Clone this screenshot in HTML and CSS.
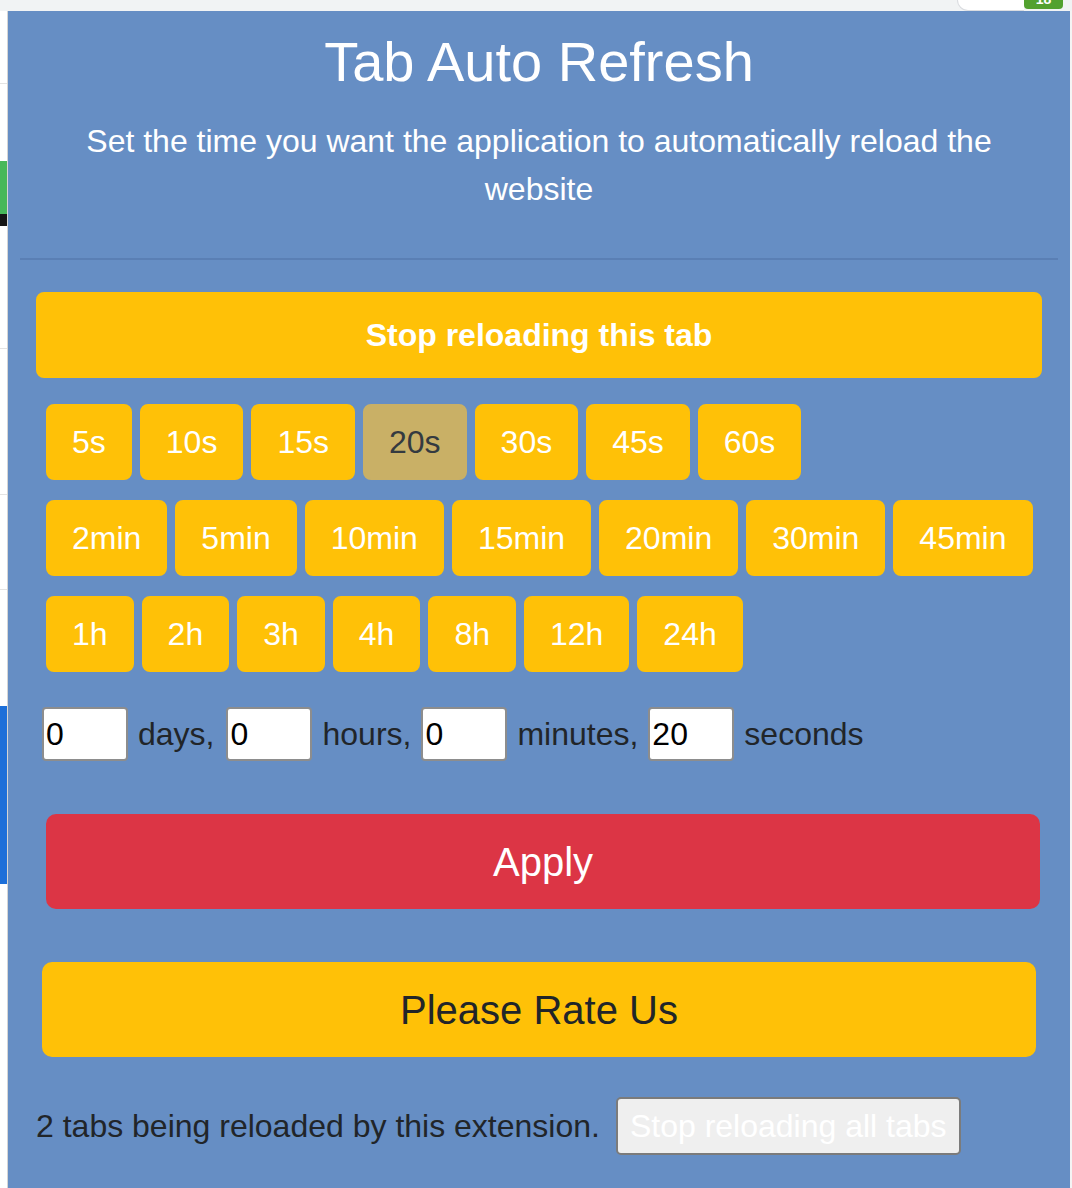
FILE: index.html
```html
<!DOCTYPE html>
<html lang="en">
<head>
<meta charset="utf-8">
<title>Tab Auto Refresh</title>
<link rel="stylesheet" href="styles.css">
</head>
<body>
<div class="topbar">
  <div class="pill"></div>
  <div class="badge"><span>18</span></div>
</div>
<div class="main">
  <div class="left-strip"></div>
  <div class="popup">
    <h1 class="title">Tab Auto Refresh</h1>
    <p class="subtitle">Set the time you want the application to automatically reload the website</p>
    <hr class="divider">
    <div class="stop-wrap"><button class="btn-stop">Stop reloading this tab</button></div>
    <div class="presets">
      <div class="preset-row">
        <button class="preset">5s</button>
        <button class="preset">10s</button>
        <button class="preset">15s</button>
        <button class="preset active">20s</button>
        <button class="preset">30s</button>
        <button class="preset">45s</button>
        <button class="preset">60s</button>
      </div>
      <div class="preset-row">
        <button class="preset">2min</button>
        <button class="preset">5min</button>
        <button class="preset">10min</button>
        <button class="preset">15min</button>
        <button class="preset">20min</button>
        <button class="preset">30min</button>
        <button class="preset">45min</button>
      </div>
      <div class="preset-row">
        <button class="preset">1h</button>
        <button class="preset">2h</button>
        <button class="preset">3h</button>
        <button class="preset">4h</button>
        <button class="preset">8h</button>
        <button class="preset">12h</button>
        <button class="preset">24h</button>
      </div>
    </div>
    <div class="time-row">
      <input class="num" type="text" value="0">
      <span class="unit unit-days">days,</span>
      <input class="num" type="text" value="0">
      <span class="unit">hours,</span>
      <input class="num" type="text" value="0">
      <span class="unit">minutes,</span>
      <input class="num" type="text" value="20">
      <span class="unit">seconds</span>
    </div>
    <div class="apply-wrap"><button class="btn-apply">Apply</button></div>
    <div class="rate-wrap"><button class="btn-rate">Please Rate Us</button></div>
    <div class="footer">
      <span class="footer-text">2 tabs being reloaded by this extension.</span>
      <button class="btn-stop-all">Stop reloading all tabs</button>
    </div>
  </div>
  <div class="right-strip"></div>
</div>
</body>
</html>
```

FILE: styles.css
```css
html, body {
  margin: 0;
  padding: 0;
}
body {
  width: 1072px;
  height: 1188px;
  overflow: hidden;
  background: #ffffff;
  font-family: "Liberation Sans", Arial, sans-serif;
}

/* browser chrome behind the popup */
.topbar {
  height: 11px;
  background: #f1f3f4;
  display: flex;
  justify-content: flex-end;
  padding-right: 9px;
}
.pill {
  width: 66px;
  height: 10px;
  background: #ffffff;
  border-bottom: 1px solid #dadce0;
  border-left: 1px solid #dadce0;
  border-bottom-left-radius: 12px;
}
.badge {
  width: 39px;
  height: 9px;
  background: #52a12f;
  border-radius: 0 0 4px 4px;
  overflow: hidden;
  color: #ffffff;
  font-size: 14px;
  font-weight: bold;
  text-align: center;
}
.badge span {
  display: block;
  line-height: 16px;
  margin-top: -9px;
}

.main {
  display: flex;
  height: 1177px;
}
.left-strip {
  width: 8px;
  box-sizing: border-box;
  border-right: 1px solid #d5d5d5;
  background:
    linear-gradient(#e3e3e3, #e3e3e3) 0 72px / 100% 1px no-repeat,
    linear-gradient(#47b85a, #47b85a) 0 150px / 100% 53px no-repeat,
    linear-gradient(#151515, #151515) 0 203px / 100% 12px no-repeat,
    linear-gradient(#e3e3e3, #e3e3e3) 0 337px / 100% 1px no-repeat,
    linear-gradient(#e3e3e3, #e3e3e3) 0 483px / 100% 1px no-repeat,
    linear-gradient(#e3e3e3, #e3e3e3) 0 578px / 100% 1px no-repeat,
    linear-gradient(#1d6fd9, #1d6fd9) 0 695px / 100% 178px no-repeat,
    #ffffff;
}
.right-strip {
  width: 2px;
  background: #f4f4f4;
}

/* popup */
.popup {
  width: 1062px;
  background: #668ec4;
  color: #212529;
}
.title {
  margin: 18px 0 0;
  font-size: 56px;
  line-height: 66px;
  font-weight: normal;
  text-align: center;
  color: #ffffff;
}
.subtitle {
  margin: 22px 0 0;
  padding: 0 40px;
  font-size: 32px;
  line-height: 48px;
  text-align: center;
  color: #ffffff;
}
.divider {
  margin: 45px 12px 0;
  height: 0;
  border: 0;
  border-top: 2px solid #5a7fb4;
}

.stop-wrap {
  margin: 32px 28px 0;
}
.btn-stop {
  display: block;
  width: 100%;
  height: 86px;
  border: 2px solid #ffc107;
  border-radius: 8px;
  background: #ffc107;
  color: #ffffff;
  font-family: "Liberation Sans", Arial, sans-serif;
  font-size: 32px;
  font-weight: bold;
  line-height: 48px;
  padding: 0;
}

.presets {
  margin-top: 26px;
  padding-left: 38px;
  display: flex;
  flex-direction: column;
  gap: 20px;
}
.preset-row {
  display: flex;
  gap: 8px;
}
.preset {
  height: 76px;
  padding: 12px 24px;
  border: 2px solid #ffc107;
  border-radius: 8px;
  background: #ffc107;
  color: #ffffff;
  font-family: "Liberation Sans", Arial, sans-serif;
  font-size: 32px;
  line-height: 48px;
}
.preset.active {
  background: #c9b066;
  border-color: #c9b066;
  color: #343a40;
}

.time-row {
  margin-top: 35px;
  padding-left: 34px;
  display: flex;
  align-items: center;
  gap: 10px;
  font-size: 32px;
  color: #212529;
}
.num {
  width: 86px;
  height: 54px;
  box-sizing: border-box;
  border: 2px solid #8d8d8d;
  border-radius: 4px;
  padding: 0 2px;
  background: #ffffff;
  color: #000000;
  font-family: "Liberation Sans", Arial, sans-serif;
  font-size: 32px;
}
.unit {
  line-height: 48px;
}
.unit-days {
  margin-right: 2px;
}

.apply-wrap {
  margin: 53px 30px 0 38px;
}
.btn-apply {
  display: block;
  width: 100%;
  height: 95px;
  border: 2px solid #dc3545;
  border-radius: 10px;
  background: #dc3545;
  color: #ffffff;
  font-family: "Liberation Sans", Arial, sans-serif;
  font-size: 40px;
  line-height: 60px;
  padding: 0;
}

.rate-wrap {
  margin: 53px 34px 0;
}
.btn-rate {
  display: block;
  width: 100%;
  height: 95px;
  border: 2px solid #ffc107;
  border-radius: 10px;
  background: #ffc107;
  color: #212529;
  font-family: "Liberation Sans", Arial, sans-serif;
  font-size: 40px;
  line-height: 60px;
  padding: 0;
}

.footer {
  margin-top: 40px;
  padding-left: 28px;
  display: flex;
  align-items: center;
  gap: 16px;
}
.footer-text {
  font-size: 32px;
  line-height: 48px;
  color: #212529;
}
.btn-stop-all {
  height: 58px;
  padding: 0 12px;
  border: 2px solid #7b7b7b;
  border-radius: 5px;
  background: #efefef;
  color: #ffffff;
  font-family: "Liberation Sans", Arial, sans-serif;
  font-size: 32px;
  line-height: 40px;
}
```
